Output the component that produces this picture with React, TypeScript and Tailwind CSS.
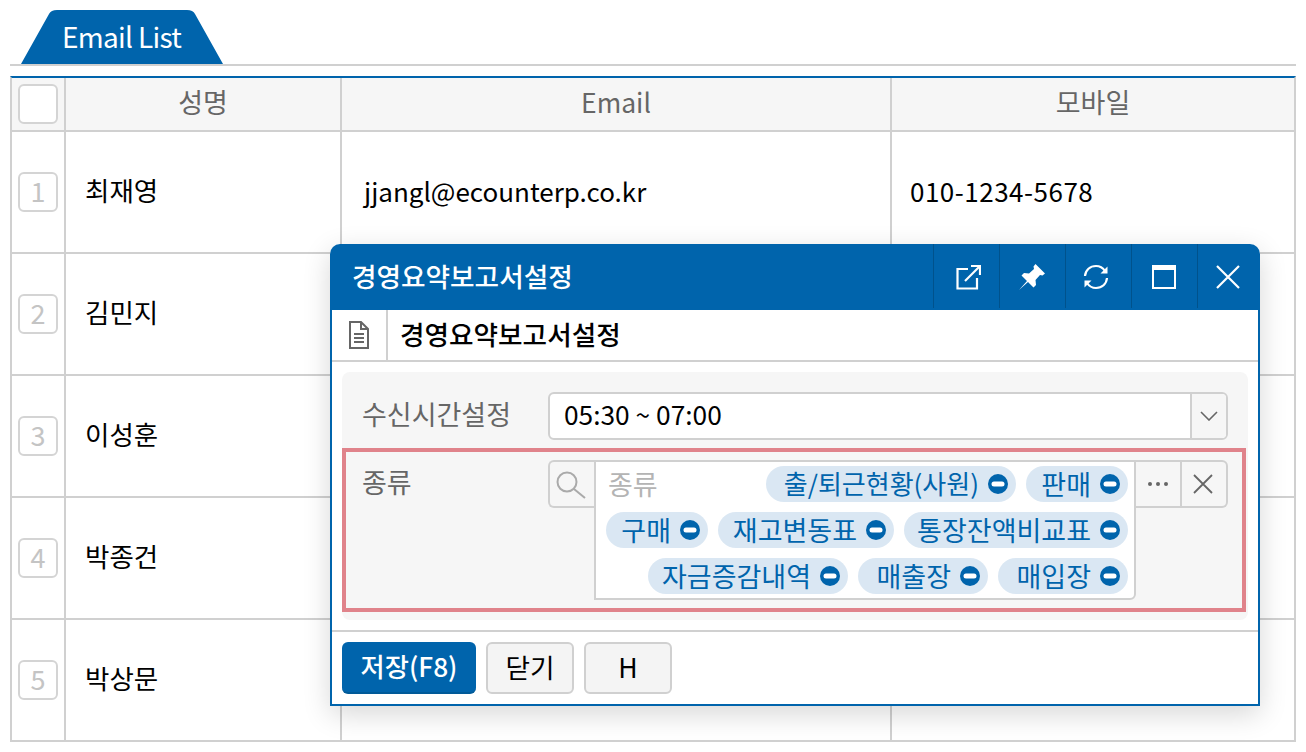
import React from "react";

const F = { fontFamily: '"Noto Sans CJK KR", "Noto Sans", sans-serif' };

function NumBox({ n }: { n?: number }) {
  return (
    <div className={`w-[40px] h-[40px] rounded-[6px] border-2 border-[#d4d4d4] flex items-center justify-center text-[27px] leading-none pb-[3px] text-[#c4c4c4] ${n ? "" : "bg-white"}`}>
      {n}
    </div>
  );
}

function HeadBtn({ children, dx = 0 }: { children: React.ReactNode; dx?: number }) {
  return (
    <div className="w-[66px] h-[66px] flex items-center justify-center relative">
      <div className="absolute left-0 top-0 h-[64px] w-[1px] bg-[#00528c]" />
      <div className="flex" style={{ marginLeft: dx }}>{children}</div>
    </div>
  );
}

function Tag({ label, w, small }: { label: string; w: number; small?: boolean }) {
  return (
    <div className={`h-[36px] rounded-full bg-[#dae7f3] flex items-center justify-end pr-[8px] text-[#0064ac] shrink-0 ${small ? "text-[26px]" : "text-[27px]"}`} style={{ width: w }}>
      <span className="mr-[9px] leading-none whitespace-nowrap pb-[2px]">{label}</span>
      <svg width="20" height="20" viewBox="0 0 20 20" className="shrink-0">
        <circle cx="10" cy="10" r="10" fill="#0064ac" />
        <rect x="3.5" y="7.5" width="13" height="5" rx="2.5" fill="#fff" />
      </svg>
    </div>
  );
}

export default function App() {
  return (
    <div style={F} className="relative w-[1306px] h-[752px] overflow-hidden bg-white pt-[10px] pl-[10px]">
      {/* Tab */}
      <div className="relative w-[1286px] h-[54px]">
        <div className="relative ml-[11px] w-[202px] h-[54px] flex items-center">
          <svg className="absolute inset-0" width="202" height="54" viewBox="0 0 202 54">
            <path d="M0 54 L28 4 Q30 0 36 0 L166 0 Q172 0 174 4 L202 54 Z" fill="#0064ac" />
          </svg>
          <span className="relative pl-[41px] pb-[2px] text-[28px] leading-none text-white tracking-[-0.7px]">Email List</span>
        </div>
      </div>
      <div className="w-[1286px] h-[2px] bg-[#d0d0d0]" />
      <div className="w-[1286px] h-[10px]" />
      {/* Table */}
      <div className="w-[1286px] border-t-2 border-[#0064ac] border-l-2 border-r-2 border-l-[#d0d0d0] border-r-[#d0d0d0]">
        <div className="grid grid-cols-[54px_276px_550px_402px] h-[54px] bg-[#f6f6f6] border-b-2 border-[#d0d0d0] text-[27px] text-[#666]">
          <div className="border-r-2 border-[#d0d0d0] flex items-center pl-[6px]"><NumBox /></div>
          <div className="border-r-2 border-[#d0d0d0] flex items-center justify-center pb-[4px]">성명</div>
          <div className="border-r-2 border-[#d0d0d0] flex items-center justify-center pb-[4px] text-[26.5px]">Email</div>
          <div className="flex items-center justify-center pb-[4px]">모바일</div>
        </div>
        <div className="grid grid-cols-[54px_276px_550px_402px] h-[122px] border-b-2 border-[#d0d0d0] text-[26px] text-black">
          <div className="border-r-2 border-[#d0d0d0] flex items-center pl-[6px]"><NumBox n={1} /></div>
          <div className="border-r-2 border-[#d0d0d0] flex items-center pl-[19px] pb-[4px] text-[26.5px]">최재영</div>
          <div className="border-r-2 border-[#d0d0d0] flex items-center pl-[22px] pb-[4px]">jjangl@ecounterp.co.kr</div>
          <div className="flex items-center pl-[18px] pb-[4px] tracking-[0.5px]">010-1234-5678</div>
        </div>
        {[["김민지", 2], ["이성훈", 3], ["박종건", 4], ["박상문", 5]].map(([name, n]) => (
          <div key={n} className="grid grid-cols-[54px_276px_550px_402px] h-[122px] border-b-2 border-[#d0d0d0] text-[26.5px] text-black">
            <div className="border-r-2 border-[#d0d0d0] flex items-center pl-[6px]"><NumBox n={n as number} /></div>
            <div className="border-r-2 border-[#d0d0d0] flex items-center pl-[19px] pb-[4px]">{name}</div>
            <div className="border-r-2 border-[#d0d0d0]" />
            <div />
          </div>
        ))}
      </div>

      {/* Modal */}
      <div className="absolute left-[330px] top-[244px] w-[930px] h-[462px] bg-white rounded-t-[10px] shadow-[0_8px_28px_rgba(0,0,0,0.16)] flex flex-col">
        <div className="h-[66px] bg-[#0064ac] rounded-t-[10px] flex items-center text-white shrink-0">
          <div className="flex-1 pl-[22px] text-[26.67px] font-medium pb-[2px]">경영요약보고서설정</div>
          <div className="flex mr-[-3px]">
            <HeadBtn dx={3}>
              <svg width="26" height="26" viewBox="0 0 26 26" fill="none" stroke="#fff" strokeWidth="2.2">
                <path d="M13 5H2.5V24.5H22V14" />
                <path d="M10 17L24 3" />
                <path d="M16 2H25V11" />
              </svg>
            </HeadBtn>
            <HeadBtn dx={0}>
              <svg width="26" height="26" viewBox="0 0 26 26" fill="#fff">
                <path d="M16.5 0L26 9.5L23.5 11.5L21 11L16.5 16L17 21L14.5 23.5L9 18L0 26L8 17L2.5 11.5L5 9L10 9.5L15 5L14.5 2.5Z" />
              </svg>
            </HeadBtn>
            <HeadBtn dx={-4}>
              <svg width="26" height="26" viewBox="0 0 26 26" fill="none" stroke="#fff" strokeWidth="2.2">
                <path d="M2 12C2.5 6 7 2 13 2C17 2 20 4 22 7" />
                <path d="M24 14C23.5 20 19 24 13 24C9 24 6 22 4 19" />
                <path d="M24.5 2.5V9.5H17.5Z" fill="#fff" stroke="none" />
                <path d="M1.5 23.5V16.5H8.5Z" fill="#fff" stroke="none" />
              </svg>
            </HeadBtn>
            <HeadBtn dx={0}>
              <svg width="24" height="24" viewBox="0 0 24 24" fill="none" stroke="#fff">
                <rect x="1" y="1" width="22" height="22" strokeWidth="2" />
                <rect x="0" y="0" width="24" height="5" fill="#fff" stroke="none" />
              </svg>
            </HeadBtn>
            <HeadBtn dx={-4}>
              <svg width="26" height="26" viewBox="0 0 26 26" fill="none" stroke="#fff" strokeWidth="2.2">
                <path d="M2 2L24 24M24 2L2 24" />
              </svg>
            </HeadBtn>
          </div>
        </div>
        <div className="flex-1 flex flex-col border-l-2 border-r-2 border-b-2 border-[#0064ac] min-h-0">
          <div className="h-[52px] flex border-b-2 border-[#d0d0d0] shrink-0">
            <div className="w-[56px] border-r-2 border-[#d0d0d0] flex items-center justify-center">
              <svg width="20" height="28" viewBox="0 0 20 28" fill="none" stroke="#666" strokeWidth="2">
                <path d="M1 1H12L19 8V27H1Z" />
                <path d="M12 1V8H19" />
                <path d="M5 13H15M5 17H15M5 21H15" />
              </svg>
            </div>
            <div className="pl-[12px] flex items-center text-[26.67px] font-medium text-black pb-[2px]">경영요약보고서설정</div>
          </div>
          <div className="mx-[10px] mt-[10px] h-[248px] bg-[#f6f6f6] rounded-[8px] relative shrink-0 pt-[20px]">
            <div className="flex items-center h-[48px] pl-[20px] pr-[20px]">
              <div className="w-[186px] text-[27px] text-[#666] pb-[4px]">수신시간설정</div>
              <div className="flex-1 h-[48px] bg-white border-2 border-[#d0d0d0] rounded-[6px] flex overflow-hidden">
                <div className="flex-1 pl-[14px] text-[26.3px] text-black flex items-center pb-[4px]">05:30 ~ 07:00</div>
                <div className="w-[36px] bg-[#f6f6f6] border-l-2 border-[#d0d0d0] flex items-center justify-center">
                  <svg width="18" height="10" viewBox="0 0 18 10" fill="none" stroke="#666" strokeWidth="1.6">
                    <path d="M1 1L9 9L17 1" />
                  </svg>
                </div>
              </div>
            </div>
            <div className="mt-[8px] w-[904px] h-[164px] border-4 border-[#e0838b] flex pt-[8px] pl-[16px]">
              <div className="w-[186px] text-[27px] text-[#666] pt-[4px] leading-[36px]">종류</div>
              <div className="w-[46px] h-[48px] border-2 border-r-0 border-[#d0d0d0] rounded-l-[6px] bg-[#f6f6f6] flex items-center justify-center">
                <svg width="30" height="30" viewBox="0 0 30 30" fill="none" stroke="#aaa" strokeWidth="2" className="mr-[2px]">
                  <circle cx="11" cy="13" r="9.5" />
                  <path d="M18 20L29 29" />
                </svg>
              </div>
              <div className="w-[542px] h-[140px] bg-white border-2 border-[#d0d0d0] rounded-br-[6px] pl-[10px] pr-[6px] pt-[4px] flex flex-col gap-[10px] shrink-0">
                <div className="flex items-center justify-end gap-[10px] h-[36px]">
                  <div className="flex-1 pl-[2px] text-[27px] text-[#b4b4b4] leading-none pb-[1px]">종류</div>
                  <Tag label="출/퇴근현황(사원)" w={250} small />
                  <Tag label="판매" w={102} />
                </div>
                <div className="flex items-center justify-end gap-[10px] h-[36px]">
                  <Tag label="구매" w={102} />
                  <Tag label="재고변동표" w={176} />
                  <Tag label="통장잔액비교표" w={224} />
                </div>
                <div className="flex items-center justify-end gap-[10px] h-[36px]">
                  <Tag label="자금증감내역" w={200} />
                  <Tag label="매출장" w={130} />
                  <Tag label="매입장" w={130} />
                </div>
              </div>
              <div className="w-[92px] h-[48px] border-2 border-l-0 border-[#d0d0d0] rounded-r-[6px] bg-[#f6f6f6] flex">
                <div className="w-[46px] border-r-2 border-[#d0d0d0] flex items-center justify-center">
                  <svg width="22" height="6" viewBox="0 0 22 6" fill="#666">
                    <circle cx="3" cy="3" r="2" /><circle cx="11" cy="3" r="2" /><circle cx="19" cy="3" r="2" />
                  </svg>
                </div>
                <div className="flex-1 flex items-center justify-center">
                  <svg width="20" height="20" viewBox="0 0 20 20" fill="none" stroke="#666" strokeWidth="1.8" className="mr-[2px]">
                    <path d="M1 1L19 19M19 1L1 19" />
                  </svg>
                </div>
              </div>
            </div>
          </div>
          <div className="mt-[10px] border-t-2 border-[#d0d0d0] flex gap-[10px] pl-[10px] pt-[10px]">
            <div className="w-[134px] h-[52px] rounded-[6px] bg-[#0064ac] border-b-2 border-[#005a98] text-white text-[26.3px] font-medium flex items-center justify-center pb-[2px]">저장(F8)</div>
            <div className="w-[88px] h-[52px] rounded-[6px] bg-[#f4f4f4] border-2 border-[#d0d0d0] text-black text-[26.67px] flex items-center justify-center pb-[3px]">닫기</div>
            <div className="w-[88px] h-[52px] rounded-[6px] bg-[#f4f4f4] border-2 border-[#d0d0d0] text-black text-[26.67px] flex items-center justify-center pb-[3px]">H</div>
          </div>
        </div>
      </div>
    </div>
  );
}
